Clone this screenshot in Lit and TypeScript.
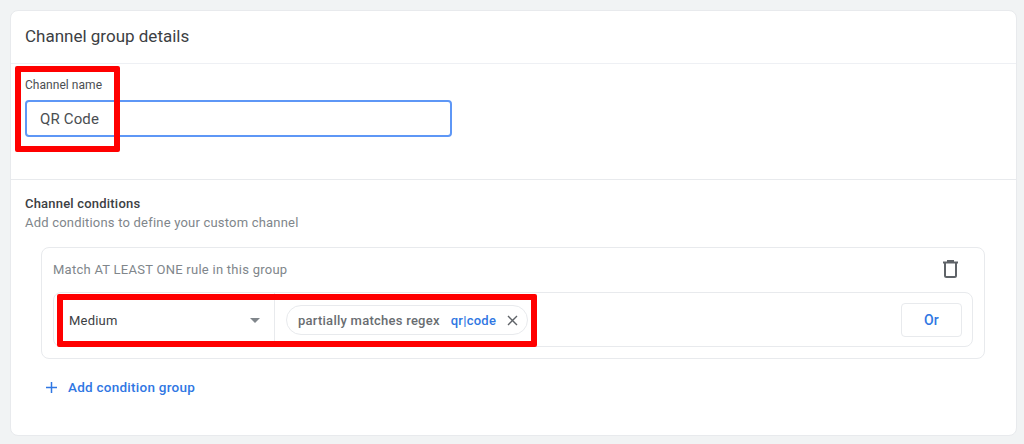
import { LitElement, html, css } from "lit";
import { customElement } from "lit/decorators.js";

@customElement("app-root")
export class AppRoot extends LitElement {
  static styles = css`
    :host {
      display: block;
      width: 1024px;
      height: 444px;
      box-sizing: border-box;
      background: #f1f3f4;
      padding: 10px 7px 8px 10px;
      font-family: Roboto, "Noto Sans", sans-serif;
      position: relative;
      overflow: hidden;
    }
    .card {
      height: 426px;
      box-sizing: border-box;
      background: #fff;
      border: 1px solid #e8eaed;
      border-radius: 8px;
    }
    .head {
      height: 53px;
      box-sizing: border-box;
      display: flex;
      align-items: center;
      padding: 0 14px 3px;
      font-size: 17px;
      color: #3c4043;
      border-bottom: 1px solid #eef0f4;
    }
    .name {
      height: 116px;
      box-sizing: border-box;
      padding: 14px 14px 0;
      border-bottom: 1px solid #e8eaed;
    }
    .label {
      font-size: 12px;
      line-height: 14px;
      letter-spacing: 0.05px;
      color: #4a4e52;
      margin-bottom: 8px;
    }
    .input {
      width: 427px;
      height: 37px;
      box-sizing: border-box;
      border: 2px solid #5e97f6;
      border-radius: 4px;
      padding: 0 13px;
      display: flex;
      align-items: center;
      font-size: 15px;
      letter-spacing: 0.15px;
      color: #4a4e52;
    }
    .cond {
      padding: 16px 14px 0;
    }
    .cond-title {
      font-size: 13px;
      font-weight: 500;
      line-height: 16px;
      letter-spacing: 0.2px;
      color: #3c4043;
    }
    .cond-sub {
      font-size: 13px;
      line-height: 16px;
      margin-top: 3px;
      letter-spacing: 0.2px;
      color: #80868b;
    }
    .group {
      margin: 16px 17px 0 16px;
      height: 112px;
      box-sizing: border-box;
      border: 1px solid #e8eaed;
      border-radius: 8px;
      padding: 0 11px;
    }
    .group-head {
      height: 44px;
      box-sizing: border-box;
      padding-bottom: 2px;
      display: flex;
      align-items: center;
      justify-content: space-between;
      font-size: 13px;
      letter-spacing: 0.26px;
      color: #80868b;
    }
    .group-head svg {
      margin-right: 15px;
    }
    .row {
      height: 55px;
      box-sizing: border-box;
      border: 1px solid #e8eaed;
      border-radius: 8px;
      display: flex;
      align-items: center;
    }
    .select {
      width: 221px;
      height: 100%;
      box-sizing: border-box;
      border-right: 1px solid #e8eaed;
      padding: 1px 14px 0 15px;
      display: flex;
      align-items: center;
      justify-content: space-between;
      font-size: 13px;
      letter-spacing: 0.2px;
      color: #3c4043;
    }
    .arrow {
      width: 0;
      height: 0;
      border-left: 5px solid transparent;
      border-right: 5px solid transparent;
      border-top: 5px solid #80868b;
    }
    .chip {
      margin: 1px 0 0 11px;
      width: 242px;
      height: 30px;
      box-sizing: border-box;
      border: 1px solid #e8eaed;
      border-radius: 15px;
      padding: 0 9px 0 11px;
      display: flex;
      align-items: center;
      font-size: 13px;
      font-weight: 500;
      letter-spacing: 0.25px;
      color: #696d71;
    }
    .chip .val {
      color: #3077e3;
      margin-left: 11px;
    }
    .chip svg {
      margin-left: auto;
    }
    .or {
      margin: 0 10px 0 auto;
      width: 61px;
      height: 34px;
      box-sizing: border-box;
      border: 1px solid #e8eaed;
      border-radius: 4px;
      display: flex;
      align-items: center;
      justify-content: center;
      font-size: 14px;
      font-weight: 500;
      letter-spacing: 0.3px;
      color: #3077e3;
    }
    .add {
      display: flex;
      align-items: center;
      gap: 10px;
      margin: 19px 0 0 20px;
      font-size: 13.5px;
      font-weight: 500;
      letter-spacing: 0.25px;
      line-height: 18px;
      color: #3077e3;
    }
    .mark {
      position: absolute;
      box-sizing: border-box;
      border: 6px solid #ff0000;
      border-radius: 2px;
    }
    .m1 {
      left: 15px;
      top: 66px;
      width: 105px;
      height: 86px;
    }
    .m2 {
      left: 57px;
      top: 294px;
      width: 480px;
      height: 53px;
    }
  `;

  render() {
    return html`
      <div class="card">
        <div class="head">Channel group details</div>
        <div class="name">
          <div class="label">Channel name</div>
          <div class="input">QR Code</div>
        </div>
        <div class="cond">
          <div class="cond-title">Channel conditions</div>
          <div class="cond-sub">Add conditions to define your custom channel</div>
          <div class="group">
            <div class="group-head">
              <span>Match AT LEAST ONE rule in this group</span>
              <svg width="15" height="18" viewBox="0 0 15 18" fill="none" stroke="#5f6368" stroke-width="2">
                <path d="M0 2.5h15"></path>
                <path d="M5 2V1h5v1"></path>
                <path d="M2 3v12.5a1.5 1.5 0 0 0 1.5 1.5h8a1.5 1.5 0 0 0 1.5-1.5V3"></path>
              </svg>
            </div>
            <div class="row">
              <div class="select"><span>Medium</span><span class="arrow"></span></div>
              <div class="chip">
                <span>partially matches regex</span>
                <span class="val">qr|code</span>
                <svg width="11" height="11" viewBox="0 0 11 11" stroke="#5f6368" stroke-width="1.4" fill="none">
                  <path d="M1 1l9 9M10 1l-9 9"></path>
                </svg>
              </div>
              <div class="or">Or</div>
            </div>
          </div>
          <div class="add">
            <svg width="13" height="13" viewBox="0 0 13 13" stroke="#3077e3" stroke-width="1.5" fill="none">
              <path d="M6.5 1v11M1 6.5h11"></path>
            </svg>
            <span>Add condition group</span>
          </div>
        </div>
      </div>
      <div class="mark m1"></div>
      <div class="mark m2"></div>
    `;
  }
}
